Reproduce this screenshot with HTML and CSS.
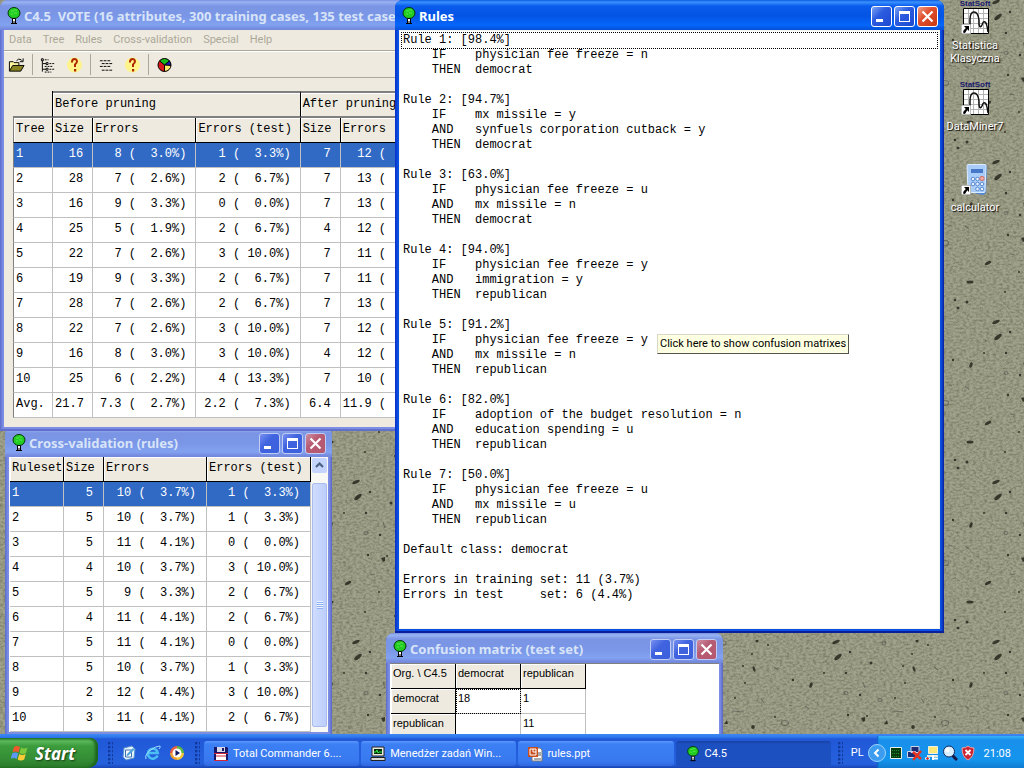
FILE: index.html
```html
<!DOCTYPE html>
<html lang="en">
<head>
    <meta charset="UTF-8">
    <meta name="viewport" content="width=device-width, initial-scale=1.0">
    <title>C4.5</title>
    <link rel="stylesheet" href="styles.css">
</head>
<body>
    <!-- shared symbols -->
    <svg class="symbols" aria-hidden="true">
        <symbol id="tree" viewBox="0 0 16 18">
            <ellipse cx="8" cy="6" rx="6" ry="5.500" fill="#22cc22" stroke="#063806"/>
            <path d="M5 4h3M8 3h3M5 7h2M8 6h3" stroke="#58e848"/>
            <path d="M6.500 11.500v4.500h3v-4.500z" fill="#fff" stroke="#000"/>
            <path d="M5 16.500h6M7.500 14.500h1" stroke="#000"/>
        </symbol>
        <symbol id="arrow" viewBox="0 0 10 10">
            <path d="M0 0h10v10H0z" fill="#fff" stroke="#777"/>
            <path d="M3 2h5v5L6.300 5.300 4 9 2 8.500 2.500 6.500 4.800 3.900z" fill="#000"/>
        </symbol>
        <symbol id="statsoft" viewBox="0 0 28 34">
            <path d="M2.500 8.500h25v25h-25z" fill="#fff" stroke="#000"/>
            <path d="M7.500 9v24M12.500 9v24M17.500 9v24M22.500 9v24M3 13.500h24M3 18.500h24M3 23.500h24M3 28.500h24" stroke="#b4b4b4"/>
            <path d="M9 33V20q0-8 4-8t5 8v4q1 5 3 1 1-4 3-3 2 1 3 10" fill="none" stroke="#111" stroke-width="1.500"/>
            <use href="#arrow" x="0" y="24" width="10" height="10"/>
        </symbol>
        <symbol id="question" viewBox="0 0 16 16">
            <circle cx="8" cy="8" r="7.500" fill="#fff48c"/>
            <path d="M5.500 5.500V4.500Q6 2 8 2t2.500 2.200Q10.500 6 8.500 7.500V10" fill="none" stroke="#b02800" stroke-width="2"/>
            <path d="M7.500 12h2.200v2.500H7.500z" fill="#b02800"/>
        </symbol>
        <symbol id="min" viewBox="0 0 19 19"><path d="M4 12h7v3H4z" fill="#fff"/></symbol>
        <symbol id="max" viewBox="0 0 19 19"><path d="M4 4h11v11H4zM5 7v7h9V7z" fill="#fff" fill-rule="evenodd"/></symbol>
        <symbol id="close" viewBox="0 0 19 19"><path d="M4.500 4.500l10 10M14.500 4.500l-10 10" stroke="#fff" stroke-width="2.200"/></symbol>
    </svg>

    <main class="desktop">
        <svg class="wallpaper" aria-hidden="true">
            <defs>
                <filter id="grain" x="0" y="0" width="100%" height="100%" color-interpolation-filters="sRGB">
                    <feTurbulence type="fractalNoise" baseFrequency="0.3 0.5" numOctaves="3" seed="4"/>
                    <feColorMatrix values="0 0 0 0 0.280  0 0 0 0 0.280  0 0 0 0 0.200  0.900 0 0 0 -0.330"/>
                </filter>
                <pattern id="stone" width="160" height="160" patternUnits="userSpaceOnUse">
                    <rect width="160" height="160" fill="#a0a28b"/>
                    <g fill="#35342a">
                        <ellipse cx="36" cy="2" rx="4" ry="1.500" transform="rotate(-22 36 2)"/>
                        <ellipse cx="38" cy="17" rx="4.500" ry="1.800" transform="rotate(-40 38 17)"/>
                        <ellipse cx="114" cy="29" rx="1.200" ry="3" transform="rotate(-20 114 29)"/>
                        <ellipse cx="11" cy="45" rx="1.500" ry="2.800" transform="rotate(20 11 45)"/>
                        <ellipse cx="28" cy="103" rx="3.500" ry="1.500" transform="rotate(-30 28 103)"/>
                        <ellipse cx="10" cy="122" rx="3.500" ry="1.500"/>
                        <ellipse cx="158" cy="148" rx="1.500" ry="1.200"/>
                        <ellipse cx="96" cy="118" rx="3" ry="1.200" transform="rotate(-50 96 118)"/>
                        <ellipse cx="113" cy="87" rx="1.800" ry="2"/>
                        <path d="M84 84l3-4 1 4zM61 78l4-1v4l-2 1z"/>
                        <circle cx="50" cy="12" r="1.200"/><circle cx="71" cy="23" r="1.500"/>
                        <circle cx="117" cy="1" r="1.500"/><circle cx="128" cy="5" r="1"/>
                        <circle cx="103" cy="26" r="1"/><circle cx="153" cy="40" r="1.200"/>
                        <circle cx="24" cy="33" r="1"/><circle cx="46" cy="33" r="1.200"/>
                        <circle cx="60" cy="55" r="1.200"/><circle cx="48" cy="75" r="1.200"/>
                        <circle cx="67" cy="76" r="1"/><circle cx="135" cy="77" r="1"/>
                        <circle cx="95" cy="58" r="1"/><circle cx="105" cy="43" r="1"/>
                        <circle cx="112" cy="14" r="1"/><circle cx="155" cy="140" r="1.300"/>
                        <circle cx="7" cy="142" r="1.500"/><circle cx="45" cy="132" r="1"/>
                        <circle cx="59" cy="112" r="1"/><circle cx="75" cy="136" r="1"/>
                        <circle cx="124" cy="108" r="1.200"/><circle cx="132" cy="139" r="1"/>
                        <circle cx="87" cy="150" r="1"/><circle cx="110" cy="131" r="1"/>
                    </g>
                    <g fill="none" stroke="#74746a" stroke-width="1.200">
                        <ellipse cx="145" cy="83" rx="3.500" ry="2.500"/>
                        <ellipse cx="80" cy="60" rx="2" ry="1.500"/>
                        <ellipse cx="46" cy="53" rx="2" ry="1.500"/>
                        <ellipse cx="84" cy="3" rx="2" ry="2"/>
                        <path d="M121 58l3 5M149 65l3 1M5 66l4 3M26 20v2M63 42l2 6M29 86v3M92 71l12 1M134 27l4 3M75 118l4-3M140 116l3 3M50 94l5 1"/>
                    </g>
                </pattern>
            </defs>
            <rect width="100%" height="100%" fill="url(#stone)"/>
            <rect width="100%" height="100%" filter="url(#grain)"/>
        </svg>

        <a href="#" class="shortcut" id="statistica">
            <span class="vendor">StatSoft</span>
            <svg class="stat-icon"><use href="#statsoft"/></svg>
            <span>Statistica Klasyczna</span>
        </a>
        <a href="#" class="shortcut" id="dataminer">
            <span class="vendor">StatSoft</span>
            <svg class="stat-icon"><use href="#statsoft"/></svg>
            <span>DataMiner7</span>
        </a>
        <a href="#" class="shortcut" id="calculator">
            <svg class="stat-icon" viewBox="0 0 28 34">
                <path d="M7 3l17-1 2 2-1 27-3 2-14-3z" fill="#4f86d8"/>
                <path d="M6 3.500q0-1 1-1h17q1 0 1 1l-1 26q0 1-1 1H8q-1 0-1-1z" fill="#a9cdf8" stroke="#dcecff"/>
                <path d="M10 7h12v4H10z" fill="#4778c8"/>
                <g fill="#e8f3ff" stroke="#5b8ad2"><circle cx="12" cy="17" r="1.800"/><circle cx="16.500" cy="17" r="1.800"/><circle cx="12" cy="22" r="1.800"/><circle cx="16.500" cy="22" r="1.800"/><circle cx="21" cy="22" r="1.800"/><circle cx="16.500" cy="27" r="1.800"/><circle cx="21" cy="27" r="1.800"/></g>
                <circle cx="21" cy="16.500" r="2.200" fill="#f0a8a0" stroke="#d07070"/>
                <use href="#arrow" x="0" y="23" width="10" height="10"/>
            </svg>
            <span>calculator</span>
        </a>

        <section class="window inactive" id="crossWindow">
            <header class="titlebar">
                <svg class="tree-icon"><use href="#tree"/></svg>
                <h2>Cross-validation (rules)</h2>
                <button aria-label="Minimize"><svg><use href="#min"/></svg></button>
                <button aria-label="Maximize"><svg><use href="#max"/></svg></button>
                <button class="close" aria-label="Close"><svg><use href="#close"/></svg></button>
            </header>
            <div class="cross-body">
                <table class="grid cross-grid">
                    <colgroup><col class="w-ruleset"><col class="w-size"><col class="w-errors"><col class="w-test"></colgroup>
                    <thead>
                        <tr><th>Ruleset</th><th>Size</th><th>Errors</th><th>Errors (test)</th></tr>
                    </thead>
                    <tbody>
                        <tr class="selected"><td>1</td><td>5</td><td>10 (  3.7%)</td><td>1 (  3.3%)</td></tr>
                        <tr><td>2</td><td>5</td><td>10 (  3.7%)</td><td>1 (  3.3%)</td></tr>
                        <tr><td>3</td><td>5</td><td>11 (  4.1%)</td><td>0 (  0.0%)</td></tr>
                        <tr><td>4</td><td>4</td><td>10 (  3.7%)</td><td>3 ( 10.0%)</td></tr>
                        <tr><td>5</td><td>5</td><td>9 (  3.3%)</td><td>2 (  6.7%)</td></tr>
                        <tr><td>6</td><td>4</td><td>11 (  4.1%)</td><td>2 (  6.7%)</td></tr>
                        <tr><td>7</td><td>5</td><td>11 (  4.1%)</td><td>0 (  0.0%)</td></tr>
                        <tr><td>8</td><td>5</td><td>10 (  3.7%)</td><td>1 (  3.3%)</td></tr>
                        <tr><td>9</td><td>2</td><td>12 (  4.4%)</td><td>3 ( 10.0%)</td></tr>
                        <tr><td>10</td><td>3</td><td>11 (  4.1%)</td><td>2 (  6.7%)</td></tr>
                    </tbody>
                </table>
                <div class="scrollbar">
                    <button aria-label="Scroll up"><svg viewBox="0 0 15 15"><path d="M4 9l3.500-3.500L11 9" fill="none" stroke="#4d6185" stroke-width="2.200"/></svg></button>
                    <div class="thumb"><span></span></div>
                </div>
            </div>
        </section>

        <section class="window inactive" id="mainWindow">
            <header class="titlebar">
                <svg class="tree-icon"><use href="#tree"/></svg>
                <h1>C4.5&nbsp; VOTE (16 attributes, 300 training cases, 135 test cases)</h1>
            </header>
            <div class="main-body">
                <nav class="menu">
                    <a href="#">Data</a>
                    <a href="#">Tree</a>
                    <a href="#">Rules</a>
                    <a href="#">Cross-validation</a>
                    <a href="#">Special</a>
                    <a href="#">Help</a>
                </nav>
                <div class="toolbar">
                    <div class="tools">
                        <button aria-label="Open"><svg viewBox="0 0 18 16"><path d="M1.500 14V4.500h4l1 1h5V8" fill="#fff59a" stroke="#000"/><path d="M1.500 14.500L5 8.500h12l-3.500 6z" fill="#8a8420" stroke="#000"/><path d="M9 3.500Q11 .500 14 2.500l1 1M16 1v3.500h-3.500" fill="none" stroke="#000"/></svg></button>
                    </div>
                    <div class="tools">
                        <button aria-label="Show tree"><svg viewBox="0 0 18 16"><path d="M2.500 1v14M3 6.500h4M3 12.500h4" stroke="#000"/><path d="M1.500 1.500h2v2h-2zM6.500 5.500h2v2h-2zM6.500 11.500h2v2h-2z" fill="#fff" stroke="#000"/><path d="M5 2.500h4M10 6.500h5M5 9.500h8M10 12.500h6M5 15.500h7" stroke="#000" stroke-dasharray="2 1"/></svg></button>
                        <button aria-label="Tree help"><svg viewBox="0 0 16 16"><use href="#question"/></svg></button>
                    </div>
                    <div class="tools">
                        <button aria-label="Show rules"><svg viewBox="0 0 18 16"><path d="M2 3.500h11M4 6.500h11M2 9.500h12M4 13.500h11" stroke="#000" stroke-dasharray="3 1"/></svg></button>
                        <button aria-label="Rules help"><svg viewBox="0 0 16 16"><use href="#question"/></svg></button>
                    </div>
                    <div class="tools">
                        <button aria-label="Chart"><svg viewBox="0 0 16 16"><circle cx="8" cy="8" r="6.500" fill="#d81818"/><path d="M8 8L3 3.800A6.500 6.500 0 0 1 13 3.800z" fill="#18b818"/><path d="M8 8l5-4.200A6.500 6.500 0 0 1 14.500 8.500z" fill="#1818a8"/><path d="M8 8l6.500.500A6.500 6.500 0 0 1 8 14.500z" fill="#f8e868"/><path d="M8 14.500V8L3 3.800M8 8l5-4.200M8 8l6.500.500" stroke="#000" fill="none"/><circle cx="8" cy="8" r="6.500" fill="none" stroke="#000"/></svg></button>
                    </div>
                </div>
                <table class="grid main-grid">
                    <colgroup><col class="w-size"><col class="w-size"><col class="w-errors"><col class="w-test"><col class="w-size"><col class="w-errors"></colgroup>
                    <thead>
                        <tr class="groups"><td></td><th colspan="3">Before pruning</th><th colspan="2">After pruning</th></tr>
                        <tr><th>Tree</th><th>Size</th><th>Errors</th><th>Errors (test)</th><th>Size</th><th>Errors</th></tr>
                    </thead>
                    <tbody>
                        <tr class="selected"><td>1</td><td>16</td><td>8 (  3.0%)</td><td>1 (  3.3%)</td><td>7</td><td>12 (</td></tr>
                        <tr><td>2</td><td>28</td><td>7 (  2.6%)</td><td>2 (  6.7%)</td><td>7</td><td>13 (</td></tr>
                        <tr><td>3</td><td>16</td><td>9 (  3.3%)</td><td>0 (  0.0%)</td><td>7</td><td>13 (</td></tr>
                        <tr><td>4</td><td>25</td><td>5 (  1.9%)</td><td>2 (  6.7%)</td><td>4</td><td>12 (</td></tr>
                        <tr><td>5</td><td>22</td><td>7 (  2.6%)</td><td>3 ( 10.0%)</td><td>7</td><td>11 (</td></tr>
                        <tr><td>6</td><td>19</td><td>9 (  3.3%)</td><td>2 (  6.7%)</td><td>7</td><td>11 (</td></tr>
                        <tr><td>7</td><td>28</td><td>7 (  2.6%)</td><td>2 (  6.7%)</td><td>7</td><td>13 (</td></tr>
                        <tr><td>8</td><td>22</td><td>7 (  2.6%)</td><td>3 ( 10.0%)</td><td>7</td><td>12 (</td></tr>
                        <tr><td>9</td><td>16</td><td>8 (  3.0%)</td><td>3 ( 10.0%)</td><td>4</td><td>12 (</td></tr>
                        <tr><td>10</td><td>25</td><td>6 (  2.2%)</td><td>4 ( 13.3%)</td><td>7</td><td>10 (</td></tr>
                        <tr><td>Avg.</td><td>21.7</td><td>7.3 (  2.7%)</td><td>2.2 (  7.3%)</td><td>6.4</td><td>11.9 (</td></tr>
                    </tbody>
                </table>
            </div>
        </section>

        <section class="window inactive" id="matrixWindow">
            <header class="titlebar">
                <svg class="tree-icon"><use href="#tree"/></svg>
                <h2>Confusion matrix (test set)</h2>
                <button aria-label="Minimize"><svg><use href="#min"/></svg></button>
                <button aria-label="Maximize"><svg><use href="#max"/></svg></button>
                <button class="close" aria-label="Close"><svg><use href="#close"/></svg></button>
            </header>
            <div class="matrix-body">
                <table class="grid matrix-grid">
                    <thead>
                        <tr><th>Org. \ C4.5</th><th>democrat</th><th>republican</th></tr>
                    </thead>
                    <tbody>
                        <tr><th>democrat</th><td class="focused">18</td><td>1</td></tr>
                        <tr><th>republican</th><td></td><td>11</td></tr>
                    </tbody>
                </table>
            </div>
        </section>

        <section class="window" id="rulesWindow">
            <header class="titlebar">
                <svg class="tree-icon"><use href="#tree"/></svg>
                <h2>Rules</h2>
                <button aria-label="Minimize"><svg><use href="#min"/></svg></button>
                <button aria-label="Maximize"><svg><use href="#max"/></svg></button>
                <button class="close" aria-label="Close"><svg><use href="#close"/></svg></button>
            </header>
            <ul class="rules">
                <li class="focused">Rule 1: [98.4%]</li>
                <li>    IF    physician fee freeze = n</li>
                <li>    THEN  democrat</li>
                <li></li>
                <li>Rule 2: [94.7%]</li>
                <li>    IF    mx missile = y</li>
                <li>    AND   synfuels corporation cutback = y</li>
                <li>    THEN  democrat</li>
                <li></li>
                <li>Rule 3: [63.0%]</li>
                <li>    IF    physician fee freeze = u</li>
                <li>    AND   mx missile = n</li>
                <li>    THEN  democrat</li>
                <li></li>
                <li>Rule 4: [94.0%]</li>
                <li>    IF    physician fee freeze = y</li>
                <li>    AND   immigration = y</li>
                <li>    THEN  republican</li>
                <li></li>
                <li>Rule 5: [91.2%]</li>
                <li>    IF    physician fee freeze = y</li>
                <li>    AND   mx missile = n</li>
                <li>    THEN  republican</li>
                <li></li>
                <li>Rule 6: [82.0%]</li>
                <li>    IF    adoption of the budget resolution = n</li>
                <li>    AND   education spending = u</li>
                <li>    THEN  republican</li>
                <li></li>
                <li>Rule 7: [50.0%]</li>
                <li>    IF    physician fee freeze = u</li>
                <li>    AND   mx missile = u</li>
                <li>    THEN  republican</li>
                <li></li>
                <li>Default class: democrat</li>
                <li></li>
                <li>Errors in training set: 11 (3.7%)</li>
                <li>Errors in test     set: 6 (4.4%)</li>
            </ul>
            <div class="tooltip" role="tooltip">Click here to show confusion matrixes</div>
        </section>
    </main>

    <footer class="taskbar">
        <button class="start">
            <svg viewBox="0 0 18 18"><path d="M3 3q3-2 6 0L7.500 8.500q-3-2-6 0z" fill="#f0582c"/><path d="M10 3.500q3 2 6.500 0L15 9q-3 2-6.500 0z" fill="#7cc83c"/><path d="M1.200 9.500q3-2 6 0L5.700 15q-3-2-6 0z" fill="#5c98f4"/><path d="M8.200 10q3 2 6.500 0l-1.500 5.500q-3.500 2-6.500 0z" fill="#fccc38"/></svg>
            <span>Start</span>
        </button>
        <div class="grip"></div>
        <div class="quick">
            <button aria-label="Show desktop"><svg viewBox="0 0 16 16"><path d="M3 3l8-2 3 3-1 9-8 2-3-3z" fill="#e8f4ff" stroke="#5a93d0"/><path d="M4.500 5h6v7h-6z" fill="#fff" stroke="#3a70b0"/><path d="M6 9l6-6 1.500 1.500-6 6L5.500 11z" fill="#4ba2d8"/></svg></button>
            <button aria-label="Internet Explorer"><svg viewBox="0 0 16 16"><path d="M12.500 10.500A5 5 0 1 1 12.800 8H4" fill="none" stroke="#4cc0f4" stroke-width="2.500"/><path d="M1 14Q-.500 10 5 5.500T15 1q.800 1-1 3" fill="none" stroke="#9fdcff"/></svg></button>
            <button aria-label="Media Player"><svg viewBox="0 0 16 16"><path d="M8 1a7 7 0 0 1 7 7H8z" fill="#5cb840"/><path d="M15 8a7 7 0 0 1-7 7V8z" fill="#f4c838"/><path d="M8 15a7 7 0 0 1-7-7h7z" fill="#f0a030"/><path d="M1 8a7 7 0 0 1 7-7v7z" fill="#e86040"/><circle cx="8" cy="8" r="4.500" fill="#fff"/><path d="M6.500 5l4.500 3-4.500 3z" fill="#101860"/></svg></button>
        </div>
        <div class="grip"></div>
        <div class="tasks">
            <button class="task"><svg viewBox="0 0 16 16"><path d="M1 1h13l1 1v13H1z" fill="#181868"/><path d="M4 1h8v5H4z" fill="#d8d8e8"/><path d="M9 2h2v3H9z" fill="#181868"/><path d="M3 8h10v6H3z" fill="#fff"/><path d="M3 10h10M1 7.500h14M1 14.500h14" stroke="#d02838"/></svg><span>Total Commander 6....</span></button>
            <button class="task"><svg viewBox="0 0 16 16"><path d="M2 1h12v9H2z" fill="#e8e8e0" stroke="#222"/><path d="M4 3h8v5H4z" fill="#052c08"/><path d="M4 6h2l1-2 1 3 1-1h3" stroke="#30e840" fill="none"/><path d="M1 11.500h14v3H1z" fill="#d8d8d0" stroke="#222"/></svg><span>Menedżer zadań Win...</span></button>
            <button class="task"><svg viewBox="0 0 16 16"><path d="M5 2h8l2 2v11H5z" fill="#fff" stroke="#777"/><path d="M11 7h3M11 9h3M7 13h7" stroke="#555"/><path d="M1 1h10v10H1z" fill="#c85020"/><path d="M3 3h6v6H3z" fill="none" stroke="#fff"/><path d="M6 3v3h3" stroke="#fff" fill="none"/></svg><span>rules.ppt</span></button>
            <button class="task active"><svg viewBox="0 0 16 18"><use href="#tree"/></svg><span>C4.5</span></button>
        </div>
        <div class="grip"></div>
        <span class="lang">PL</span>
        <div class="tray">
            <button class="chevron" aria-label="Show hidden icons"><svg viewBox="0 0 18 18"><circle cx="9" cy="9" r="8.500" fill="#3c9cf0" stroke="#9cd4ff"/><path d="M10.500 5.500L7 9l3.500 3.500" fill="none" stroke="#fff" stroke-width="2"/></svg></button>
            <svg viewBox="0 0 16 16"><path d="M2.500 2.500h11v11h-11z" fill="#063c0c" stroke="#e8f0e8"/><path d="M4 5.500h8M4 8.500h8M4 11.500h8" stroke="#1c8c30" stroke-dasharray="1 1"/></svg>
            <svg viewBox="0 0 16 16"><path d="M5 1.500h8v6H5zM1.500 6.500h8v6h-8z" fill="#1c2c74" stroke="#d0d4e8"/><path d="M7 7l8 7M15 6l-8 9" stroke="#e8301c" stroke-width="2.500"/></svg>
            <svg viewBox="0 0 16 16"><path d="M4.500 1.500h9v7h-9z" fill="#fce878" stroke="#f0f0e0"/><path d="M3 10h11v2H3z" fill="#e8e8e0"/><path d="M1 13.500h5M10 13.500h4M9 10v5" stroke="#fff" stroke-width="2"/><path d="M2 13.500h3M3.500 12v3" stroke="#e83828"/></svg>
            <svg viewBox="0 0 16 16"><path d="M10 10l5 5" stroke="#181848" stroke-width="3"/><circle cx="7" cy="6.500" r="5.500" fill="#d8f0ff" stroke="#14285c"/><circle cx="5.500" cy="5" r="2" fill="#fff"/></svg>
            <svg viewBox="0 0 16 16"><path d="M2 3q4 0 6-2 2 2 6 2 0 9-6 12-6-3-6-12z" fill="#cc2430" stroke="#f0a0a0"/><path d="M5.500 5l5 5M10.500 5l-5 5" stroke="#fff" stroke-width="1.800"/></svg>
            <time>21:08</time>
        </div>
    </footer>
</body>
</html>
```
FILE: styles.css
```css
* {
    box-sizing: border-box;
}

body {
    display: flex;
    flex-direction: column;
    height: 100vh;
    margin: 0;
    overflow: hidden;
    font-family: Roboto, sans-serif;
    font-size: 11px;
    color: #000;
}

button {
    padding: 0;
    border: none;
    background: none;
    font: inherit;
    color: inherit;
}

a {
    color: inherit;
    text-decoration: none;
}

svg {
    display: block;
    flex: none;
}

.symbols {
    position: absolute;
    width: 0;
    height: 0;
}

/* desktop */
.desktop {
    position: relative;
    flex: 1;
    min-height: 0;
    overflow: hidden;
}

.wallpaper {
    width: 100%;
    height: 100%;
}

.shortcut {
    position: absolute;
    left: 939px;
    width: 72px;
    display: flex;
    flex-direction: column;
    align-items: center;
    line-height: 13px;
    text-align: center;
    color: #fff;
    text-shadow: 1px 1px 1px #000;
}

.stat-icon {
    width: 28px;
    height: 34px;
    margin-bottom: 5px;
}

.vendor {
    height: 8px;
    margin-bottom: -8px;
    font-family: "Liberation Sans", sans-serif;
    font-size: 8px;
    font-weight: bold;
    line-height: 8px;
    color: #18186c;
    text-shadow: none;
}

#statistica { top: 0; }
#dataminer { top: 81px; }
#calculator { top: 162px; }

/* windows */
.window {
    position: absolute;
    display: flex;
    flex-direction: column;
    padding: 0 4px 4px;
    border-radius: 8px 8px 0 0;
    background: linear-gradient(90deg, #0a2fc4, #0b50e4 3px, #0b50e4 calc(100% - 3px), #0a1f9c);
    box-shadow: inset 0 -2px #0a1f9c;
}

.titlebar {
    display: flex;
    align-items: center;
    gap: 2px;
    flex: none;
    height: 30px;
    margin: 0 -4px;
    padding: 2px 6px 0 6px;
    border-radius: 8px 8px 0 0;
    background: linear-gradient(#0a5ae0, #3a92ff 2px, #0a5cec 6px, #0454e4 16px, #0666fc 25px, #0454dc 29px);
    color: #fff;
    white-space: nowrap;
}

.titlebar h1,
.titlebar h2 {
    flex: 1;
    margin: 0;
    font-family: "Noto Sans", sans-serif;
    font-size: 13px;
    line-height: 20px;
}

.tree-icon {
    width: 16px;
    height: 18px;
}

.titlebar button {
    width: 21px;
    height: 21px;
    border: 1px solid #fff;
    border-radius: 3px;
    background: linear-gradient(135deg, #7ca4f4, #2c5ce0 40%, #1c48d0);
}

.titlebar button svg {
    width: 19px;
    height: 19px;
}

.titlebar button.close {
    background: linear-gradient(135deg, #f0a088, #e05030 40%, #c83810);
}

.inactive {
    background: linear-gradient(90deg, #5c6ccc, #7b8ee4 3px, #7b8ee4 calc(100% - 3px), #5a66c4);
    box-shadow: inset 0 -2px #6070cc;
}

.inactive .titlebar {
    background: linear-gradient(#7a8ee0, #98b4f4 2px, #7b95e4 6px, #7a96e6 16px, #82a2f0 25px, #7488dc 29px);
    color: #d8e4f8;
}

.inactive .titlebar button {
    border-color: #c0ccf4;
    background: linear-gradient(135deg, #7890f0, #4064e0 40%, #3c60dc);
}

.inactive .titlebar button.close {
    background: linear-gradient(135deg, #cc90a4, #b85c74 40%, #b45870);
}

#mainWindow {
    left: 0;
    top: 0;
    width: 460px;
}

#crossWindow {
    left: 5px;
    top: 427px;
    width: 327px;
}

#rulesWindow {
    left: 395px;
    top: 0;
    width: 549px;
    height: 633px;
}

#matrixWindow {
    left: 386px;
    top: 633px;
    width: 337px;
}

/* data grids */
.grid {
    border-collapse: separate;
    border-spacing: 0;
    table-layout: fixed;
    font-family: "Liberation Mono", monospace;
    font-size: 12px;
    line-height: 14px;
}

.grid th,
.grid td {
    height: 25px;
    padding: 0 9px 2px 2px;
    border-right: 1px solid #c0c0c0;
    border-bottom: 1px solid #c0c0c0;
    background-color: #fff;
    font-weight: normal;
    text-align: right;
    white-space: pre;
}

.grid th {
    padding-right: 0;
    border-color: #000;
    background-color: #eeeadf;
    box-shadow: inset 1px 1px #fff;
    text-align: left;
}

.grid td:first-child {
    text-align: left;
}

.grid .selected td {
    background-color: #316ac5;
    color: #fff;
}

.w-size { width: 40px; }
.w-errors { width: 103px; }
.w-test { width: 104px; }
.w-ruleset { width: 54px; }

/* main window */
.main-body {
    overflow: hidden;
    padding-bottom: 9px;
    background-color: #eeeadf;
}

.menu {
    display: flex;
    gap: 11px;
    height: 21px;
    padding: 0 5px;
    border-bottom: 1px solid #aca899;
    line-height: 19px;
    color: #aca899;
}

.toolbar {
    display: flex;
    align-items: center;
    height: 27px;
    border-top: 1px solid #fff;
    border-bottom: 1px solid #aca899;
}

.tools {
    display: flex;
    gap: 9px;
    height: 21px;
    padding: 0 7px;
    align-items: center;
    border-right: 1px solid #aca899;
}

.tools:first-child {
    padding-left: 4px;
}

.tools:last-child {
    border-right: none;
}

.tools svg {
    width: 17px;
    height: 16px;
}

.main-grid {
    width: 431px;
    margin: 13px 0 0 9px;
}

.main-grid th:first-child,
.main-grid tbody td:first-child {
    border-left: 1px solid #808080;
}

.main-grid .groups th {
    height: 27px;
    border-top: 2px solid #808080;
    border-bottom: 2px solid #808080;
}

.main-grid .groups td {
    border-color: #000;
    border-bottom: 2px solid #808080;
    background-color: #eeeadf;
}

.main-grid td:last-child {
    padding-right: 57px;
}

/* cross-validation window */
.cross-body {
    display: flex;
    overflow: hidden;
    padding-left: 1px;
    background-color: #fff;
}

.cross-grid {
    width: 301px;
    flex: none;
}

.cross-grid td {
    padding-right: 10px;
}

.scrollbar {
    flex: 1;
    display: flex;
    flex-direction: column;
    gap: 10px;
    padding: 1px;
    background-color: #f8f8f4;
}

.scrollbar button {
    width: 15px;
    height: 15px;
    border-radius: 2px;
    background-color: #c4d4fc;
}

.thumb {
    display: flex;
    align-items: center;
    justify-content: center;
    height: 244px;
    border: 1px solid #a8bcf0;
    border-radius: 2px;
    background: linear-gradient(90deg, #d0dcfe, #bccefc);
}

.thumb span {
    width: 6px;
    height: 8px;
    background: repeating-linear-gradient(#eef4fe 0 1px, #8cb0f8 1px 2px);
}

/* confusion matrix window */
.matrix-body {
    min-height: 120px;
    padding-left: 1px;
    border-top: 1px solid #808080;
    background-color: #fff;
}

.matrix-grid {
    width: 195px;
    font-family: "Liberation Sans", sans-serif;
    font-size: 11px;
}

.matrix-grid th,
.matrix-grid td {
    padding: 0 0 6px 2px;
    text-align: left;
}

.matrix-grid td.focused {
    outline: 1px dotted #000;
    outline-offset: -1px;
}

/* rules window */
.rules {
    flex: 1;
    margin: 0;
    padding: 2px;
    list-style: none;
    background-color: #fff;
    border: 1px solid #f4f4f0;
    font-family: "Liberation Mono", monospace;
    font-size: 12px;
    line-height: 15px;
}

.rules li {
    height: 15px;
    padding-left: 1px;
    white-space: pre;
}

.rules li.focused {
    outline: 1px dotted #000;
}

.tooltip {
    position: absolute;
    left: 262px;
    top: 334px;
    padding: 2px;
    border: 1px solid #000;
    border-color: #d8d8c8 #55554c #55554c #d8d8c8;
    background-color: #ffffe1;
    line-height: 14px;
    white-space: nowrap;
}

/* taskbar */
.taskbar {
    display: flex;
    align-items: stretch;
    flex: none;
    height: 34px;
    background: linear-gradient(#3c88f4, #3078ec 3px, #2058d8 5px, #245edc 20px, #2460dc 30px, #1a44b4);
    color: #fff;
}

.start {
    display: flex;
    align-items: center;
    gap: 6px;
    width: 98px;
    margin-top: 4px;
    padding-left: 11px;
    border-radius: 0 8px 10px 0;
    background: linear-gradient(#2c7c2c, #5cb85c 3px, #3c9c3c 8px, #348c34 22px, #287828);
    box-shadow: inset -3px 0 3px #1c641c;
    font-family: "Noto Sans", sans-serif;
    font-size: 17px;
    font-style: italic;
    font-weight: bold;
    text-shadow: 1px 1px 2px #143c14;
}

.start svg {
    width: 18px;
    height: 18px;
}

.grip {
    flex: none;
    width: 5px;
    height: 22px;
    margin: 8px 8px 0 10px;
    background: radial-gradient(circle at 1px 1px, #123a9c 1px, transparent 2px) 0 0 / 4px 4px;
}

.quick {
    display: flex;
    align-items: center;
    gap: 8px;
    padding: 4px 0 0;
}

.quick svg {
    width: 16px;
    height: 16px;
}

.quick + .grip {
    margin-right: 4px;
}

.tasks {
    display: flex;
    flex: 1;
    gap: 2px;
    min-width: 0;
    padding: 7px 0 2px;
}

.tasks + .grip {
    margin-left: 7px;
}

.task {
    display: flex;
    align-items: center;
    gap: 4px;
    flex: 1;
    min-width: 0;
    padding: 0 9px;
    border-radius: 3px;
    background: linear-gradient(#5c98fc, #3c80f4 3px, #3878f0 20px, #3068e0);
    white-space: nowrap;
}

.task svg {
    width: 16px;
    height: 16px;
}

.task.active {
    background: linear-gradient(#1840a0, #1c50c0 3px, #1c50c0);
}

.lang {
    padding: 5px 13px 0 0;
    line-height: 28px;
}

.tray {
    display: flex;
    align-items: center;
    gap: 2px;
    margin-top: 2px;
    padding: 2px 13px 0 0;
    background: linear-gradient(90deg, #0c58c0, transparent 2px), linear-gradient(#38b4f8, #1890ec 4px, #1494ec 24px, #107cd0);
}

.tray svg {
    width: 16px;
    height: 16px;
}

.chevron {
    margin-left: -9px;
}

.tray .chevron svg {
    width: 18px;
    height: 18px;
}

.tray time {
    margin-left: 6px;
}
```
